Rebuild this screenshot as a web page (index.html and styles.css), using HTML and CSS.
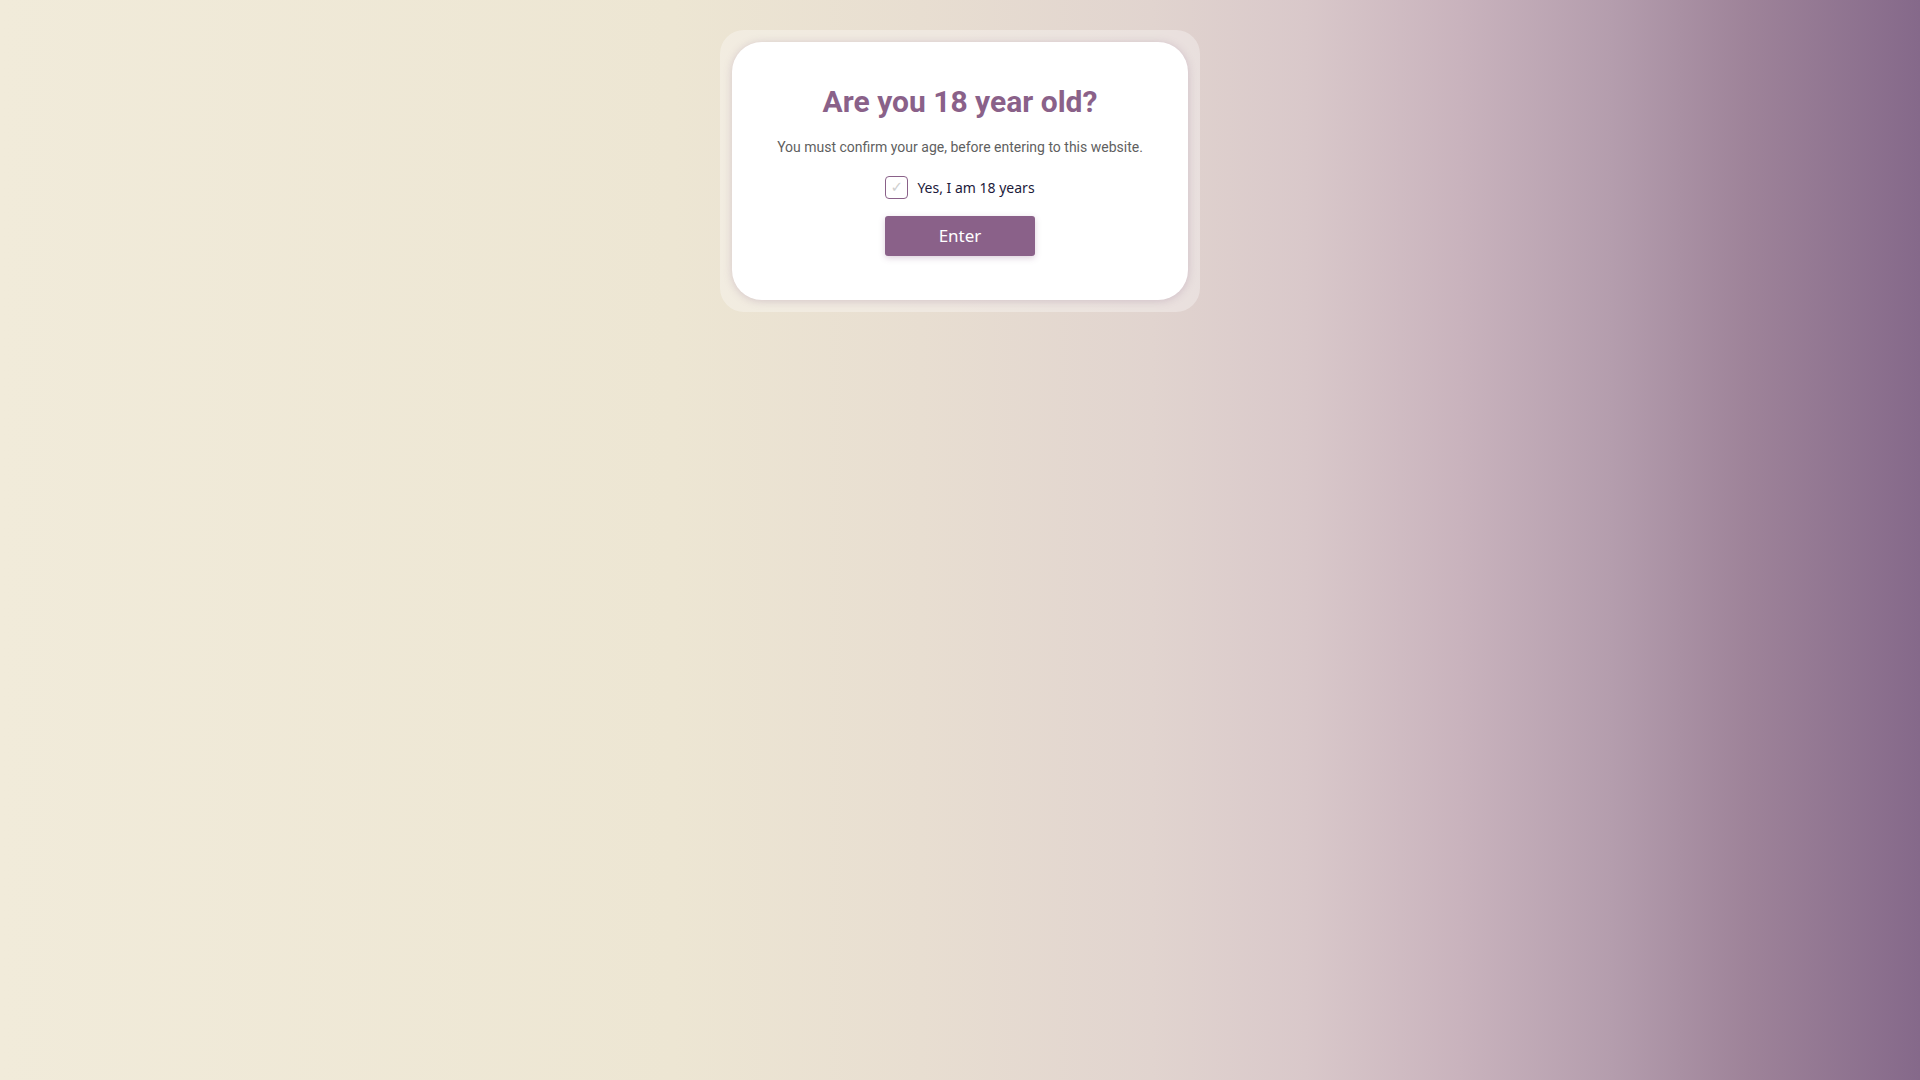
FILE: index.html
```html
<!DOCTYPE html>
<html lang="en">
<head>
<meta charset="utf-8">
<title>Age verification</title>
<link rel="stylesheet" href="styles.css">
</head>
<body>
<div class="page">
  <div class="frame">
    <div class="card">
      <h1 class="title">Are you 18 year old?</h1>
      <p class="subtitle">You must confirm your age, before entering to this website.</p>
      <label class="confirm">
        <span class="box">&#10003;</span>
        <span class="label-text">Yes, I am 18 years</span>
      </label>
      <button class="enter" type="button">Enter</button>
    </div>
  </div>
</div>
</body>
</html>
```

FILE: styles.css
```css
html, body {
  margin: 0;
  padding: 0;
  height: 100%;
}

body {
  background: linear-gradient(to right,
    #f1ebda 0%,
    #ede6d3 35%,
    #e8ded1 48%,
    #e1d4cf 60%,
    #d9c8ca 68%,
    #c9b3bd 76%,
    #b49dad 84%,
    #9e8399 91%,
    #85698a 100%);
  font-family: Roboto, "Noto Sans", sans-serif;
}

.page {
  display: flex;
  justify-content: center;
  padding-top: 30px;
}

.frame {
  width: 456px;
  padding: 12px;
  border-radius: 24px;
  background: rgba(255, 255, 255, 0.32);
}

.card {
  background: #ffffff;
  border-radius: 30px;
  box-shadow: 0 1px 8px rgba(138, 97, 137, 0.28);
  padding: 42px 20px 44px;
  display: flex;
  flex-direction: column;
  align-items: center;
}

.title {
  margin: 0;
  font-family: Roboto, sans-serif;
  font-weight: 700;
  font-size: 30px;
  line-height: 36px;
  color: #8a6189;
}

.subtitle {
  margin: 17px 0 0;
  font-family: Roboto, sans-serif;
  font-size: 14px;
  line-height: 20px;
  color: #5f5f5f;
}

.confirm {
  margin-top: 18px;
  display: flex;
  align-items: center;
  gap: 9px;
  height: 24px;
}

.box {
  width: 21px;
  height: 21px;
  border: 1px solid #8a6189;
  border-radius: 4px;
  display: flex;
  align-items: center;
  justify-content: center;
  color: #cfcfcf;
  font-family: "DejaVu Sans", sans-serif;
  font-size: 15px;
  line-height: 1;
}

.label-text {
  font-family: "Noto Sans", "Open Sans", sans-serif;
  font-size: 14px;
  color: #1c1a3a;
}

.enter {
  margin-top: 17px;
  width: 150px;
  height: 40px;
  padding: 0 0 2px;
  border: none;
  border-radius: 3px;
  background: #8a6189;
  color: #ffffff;
  font-family: "Noto Sans", "Open Sans", sans-serif;
  font-size: 17px;
  box-shadow: 0 2px 6px rgba(138, 97, 137, 0.3);
  cursor: pointer;
}
```
